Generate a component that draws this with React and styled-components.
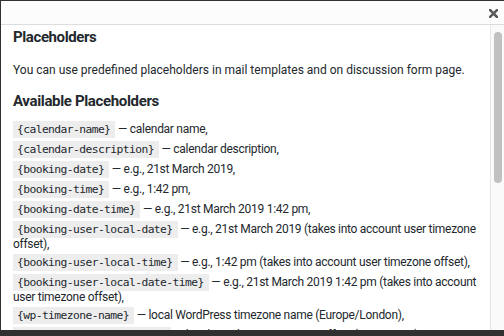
import React from "react";
import styled, { createGlobalStyle } from "styled-components";

const Global = createGlobalStyle`
  html, body { margin: 0; padding: 0; }
  body {
    background: #303030;
    width: 504px;
    height: 336px;
    overflow: hidden;
    font-family: Roboto, "Liberation Sans", Arial, sans-serif;
  }
`;

const Frame = styled.div`
  padding: 1px 0 0 1px;
  height: 336px;
  box-sizing: border-box;
`;

const Modal = styled.div`
  width: 503px;
  height: 329px;
  background: #fff;
  display: flex;
  flex-direction: column;
  overflow: hidden;
`;

const Header = styled.div`
  height: 23px;
  flex: none;
  background: #fcfcfc;
  border-bottom: 1px solid #dddddd;
  display: flex;
  align-items: center;
  justify-content: flex-end;
  padding-right: 6px;
`;

const Close = styled.button`
  width: 10px;
  height: 10px;
  padding: 0;
  margin: 1px 0 0 0;
  border: 0;
  background: transparent;
  display: flex;
  align-items: center;
  justify-content: center;
  cursor: pointer;
`;

const Body = styled.div`
  flex: 1;
  display: flex;
  min-height: 0;
`;

const Scroll = styled.div`
  flex: 1;
  overflow: hidden;
  padding: 2px 12px 0 12px;
  color: #23282d;
`;

const Track = styled.div`
  width: 14px;
  flex: none;
  box-sizing: border-box;
  background: #fafafa;
  border-left: 1px solid #e6e6e6;
  padding: 7px 2px 0 3px;
`;

const Thumb = styled.div`
  width: 8px;
  height: 151px;
  border-radius: 4px;
  background: #c1c1c1;
`;

const Title = styled.h2`
  margin: 0;
  font-size: 15px;
  line-height: 20px;
  font-weight: 700;
  letter-spacing: -0.4px;
  color: #23282d;
`;

const Intro = styled.p`
  margin: 14px 0 0 0;
  font-size: 12px;
  line-height: 18px;
`;

const SubTitle = styled.h3`
  margin: 12px 0 10px 0;
  font-size: 15px;
  line-height: 20px;
  font-weight: 700;
  letter-spacing: -0.35px;
  color: #23282d;
`;

const Item = styled.div`
  font-size: 12px;
  line-height: 13px;
  letter-spacing: -0.28px;
  margin: 0 0 3px 0;
`;

const Code = styled.code`
  display: inline-block;
  font-family: "DejaVu Sans Mono", "Liberation Mono", monospace;
  font-size: 11.3px;
  letter-spacing: -0.58px;
  line-height: 15px;
  padding: 1px 5px 1px 4px;
  background: rgba(0, 0, 0, 0.07);
  color: #23282d;
`;

const items = [
  ["{calendar-name}", "calendar name,"],
  ["{calendar-description}", "calendar description,"],
  ["{booking-date}", "e.g., 21st March 2019,"],
  ["{booking-time}", "e.g., 1:42 pm,"],
  ["{booking-date-time}", "e.g., 21st March 2019 1:42 pm,"],
  ["{booking-user-local-date}", "e.g., 21st March 2019 (takes into account user timezone offset),"],
  ["{booking-user-local-time}", "e.g., 1:42 pm (takes into account user timezone offset),"],
  ["{booking-user-local-date-time}", "e.g., 21st March 2019 1:42 pm (takes into account user timezone offset),"],
  ["{wp-timezone-name}", "local WordPress timezone name (Europe/London),"],
  ["{wp-timezone-utc-offset}", "local WordPress timezone offset (UTC+00:00),"],
];

export default function App() {
  return (
    <>
      <Global />
      <Frame>
        <Modal>
          <Header>
            <Close aria-label="Close">
              <svg width="9" height="9" viewBox="0 0 9 9">
                <path d="M1 1 L8 8 M8 1 L1 8" stroke="#5a5a5a" strokeWidth="2.5" strokeLinecap="square" />
              </svg>
            </Close>
          </Header>
          <Body>
            <Scroll>
              <Title>Placeholders</Title>
              <Intro>You can use predefined placeholders in mail templates and on discussion form page.</Intro>
              <SubTitle>Available Placeholders</SubTitle>
              {items.map(([code, desc]) => (
                <Item key={code}>
                  <Code>{code}</Code> — {desc}
                </Item>
              ))}
            </Scroll>
            <Track>
              <Thumb />
            </Track>
          </Body>
        </Modal>
      </Frame>
    </>
  );
}
